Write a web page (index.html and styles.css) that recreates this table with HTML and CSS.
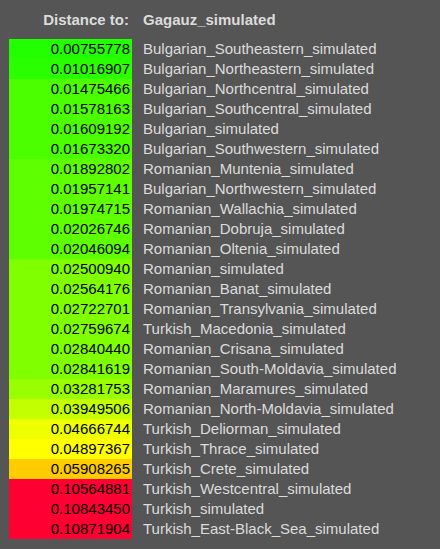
FILE: index.html
```html
<!DOCTYPE html>
<html>
<head>
<meta charset="utf-8">
<link rel="stylesheet" href="styles.css">
</head>
<body>
<div class="table">
  <div class="head num">Distance to:</div><div class="head name">Gagauz_simulated</div>
  <div class="cell num c1">0.00755778</div><div class="cell name">Bulgarian_Southeastern_simulated</div>
  <div class="cell num c2">0.01016907</div><div class="cell name">Bulgarian_Northeastern_simulated</div>
  <div class="cell num c3">0.01475466</div><div class="cell name">Bulgarian_Northcentral_simulated</div>
  <div class="cell num c3">0.01578163</div><div class="cell name">Bulgarian_Southcentral_simulated</div>
  <div class="cell num c3">0.01609192</div><div class="cell name">Bulgarian_simulated</div>
  <div class="cell num c3">0.01673320</div><div class="cell name">Bulgarian_Southwestern_simulated</div>
  <div class="cell num c4">0.01892802</div><div class="cell name">Romanian_Muntenia_simulated</div>
  <div class="cell num c4">0.01957141</div><div class="cell name">Bulgarian_Northwestern_simulated</div>
  <div class="cell num c4">0.01974715</div><div class="cell name">Romanian_Wallachia_simulated</div>
  <div class="cell num c4">0.02026746</div><div class="cell name">Romanian_Dobruja_simulated</div>
  <div class="cell num c4">0.02046094</div><div class="cell name">Romanian_Oltenia_simulated</div>
  <div class="cell num c5">0.02500940</div><div class="cell name">Romanian_simulated</div>
  <div class="cell num c5">0.02564176</div><div class="cell name">Romanian_Banat_simulated</div>
  <div class="cell num c5">0.02722701</div><div class="cell name">Romanian_Transylvania_simulated</div>
  <div class="cell num c5">0.02759674</div><div class="cell name">Turkish_Macedonia_simulated</div>
  <div class="cell num c5">0.02840440</div><div class="cell name">Romanian_Crisana_simulated</div>
  <div class="cell num c5">0.02841619</div><div class="cell name">Romanian_South-Moldavia_simulated</div>
  <div class="cell num c6">0.03281753</div><div class="cell name">Romanian_Maramures_simulated</div>
  <div class="cell num c7">0.03949506</div><div class="cell name">Romanian_North-Moldavia_simulated</div>
  <div class="cell num c8">0.04666744</div><div class="cell name">Turkish_Deliorman_simulated</div>
  <div class="cell num c9">0.04897367</div><div class="cell name">Turkish_Thrace_simulated</div>
  <div class="cell num c10">0.05908265</div><div class="cell name">Turkish_Crete_simulated</div>
  <div class="cell num c11">0.10564881</div><div class="cell name">Turkish_Westcentral_simulated</div>
  <div class="cell num c11">0.10843450</div><div class="cell name">Turkish_simulated</div>
  <div class="cell num c11">0.10871904</div><div class="cell name">Turkish_East-Black_Sea_simulated</div>
</div>
</body>
</html>
```
FILE: styles.css
```css
html, body {
  margin: 0;
  padding: 0;
  background: #555555;
}
body {
  padding: 10px 0 0 9px;
  font-family: "Liberation Sans", Arial, sans-serif;
  font-size: 15px;
  line-height: 20px;
}
.table {
  display: grid;
  grid-template-columns: 123px auto;
  column-gap: 11px;
  justify-content: start;
}
.head {
  font-weight: bold;
  color: #dcdcdc;
  margin-bottom: 9px;
}
.head.num {
  text-align: right;
  padding-right: 3px;
}
.cell {
  height: 20px;
  white-space: nowrap;
}
.cell.num {
  text-align: right;
  padding-right: 2px;
  color: #000;
}
.cell.name {
  color: #dcdcdc;
}
.c1 { background: #22ff00; }
.c2 { background: #2aff00; }
.c3 { background: #4cff00; }
.c4 { background: #5eff00; }
.c5 { background: #80ff00; }
.c6 { background: #99ff00; }
.c7 { background: #c4ff00; }
.c8 { background: #eeff00; }
.c9 { background: #ffff00; }
.c10 { background: #ffcc00; }
.c11 { background: #ff0033; }
```
